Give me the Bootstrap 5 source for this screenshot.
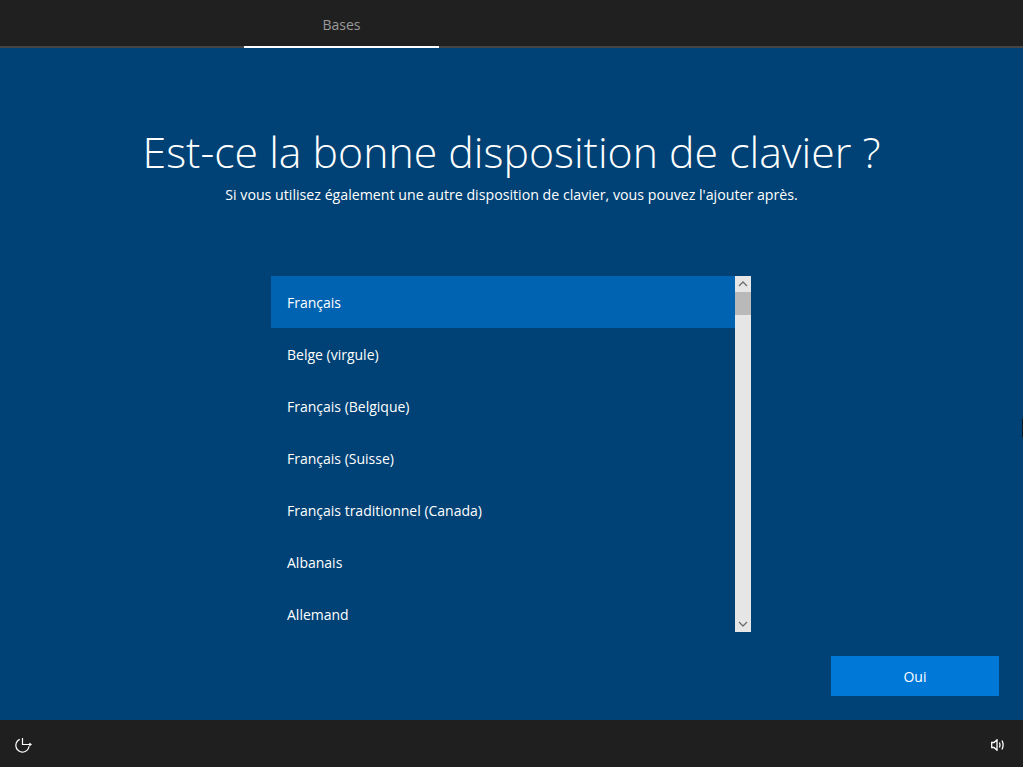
<!DOCTYPE html>
<html lang="fr">

<head>
    <meta charset="UTF-8">
    <meta name="viewport" content="width=device-width, initial-scale=1.0">
    <title>Disposition de clavier</title>
    <link rel="stylesheet" href="https://cdn.jsdelivr.net/npm/bootstrap@5.3.0/dist/css/bootstrap.min.css">
    <style>
        body {
            background-color: #004275;
            color: #fff;
            font-family: "Open Sans", "Noto Sans", sans-serif;
            height: 767px;
            overflow: hidden;
        }

        .oobe-top {
            height: 48px;
            background-color: #202020;
            border-bottom: 2px solid #454545;
        }

        .oobe-tab {
            margin-left: 244px;
            width: 195px;
            height: 48px;
            border-bottom: 2px solid #fff;
            color: #9a9a9a;
            font-size: 14px;
            padding-top: 14px;
            text-align: center;
        }

        .oobe-main {
            height: 672px;
        }

        .oobe-title {
            font-weight: 300;
            font-size: 42.8px;
            line-height: 60px;
            padding-top: 74px;
            margin: 0;
        }

        .oobe-sub {
            font-size: 14.2px;
            line-height: 20px;
            margin: 3px 0 0;
        }

        .oobe-listbox {
            width: 480px;
            height: 356px;
            margin: 71px 0 0 271px;
        }

        .oobe-rows {
            width: 464px;
            overflow: hidden;
            border-radius: 0;
        }

        .oobe-rows .list-group-item {
            background: transparent;
            color: #fff;
            border: 0;
            border-radius: 0;
            height: 52px;
            padding: 17px 16px 15px;
            font-size: 14px;
            line-height: 20px;
        }

        .oobe-rows .list-group-item.active {
            background-color: #0063b1;
        }

        .oobe-scroll {
            width: 16px;
            background-color: #e6e6e6;
        }

        .oobe-arrow {
            height: 16px;
        }

        .oobe-thumb {
            height: 23px;
            background-color: #b9b9b9;
        }

        .oobe-btn {
            width: 168px;
            height: 40px;
            margin: 24px 24px 0 0;
            background-color: #0078d7;
            color: #fff;
            border: 0;
            border-radius: 0;
            font-size: 14px;
            padding: 0;
        }

        .oobe-bottom {
            height: 47px;
            background-color: #1f1f1f;
            padding: 15px 18px 0 15px;
        }

        .oobe-speaker {
            margin-top: 4px;
        }

        .oobe-edge {
            position: absolute;
            right: 0;
            top: 419px;
            width: 1px;
            height: 18px;
            background-color: #101820;
        }
    </style>
</head>

<body>
    <div class="oobe-top">
        <div class="oobe-tab">Bases</div>
    </div>

    <div class="oobe-main">
        <div class="text-center">
            <h1 class="oobe-title">Est-ce la bonne disposition de clavier ?</h1>
            <p class="oobe-sub">Si vous utilisez également une autre disposition de clavier, vous pouvez l'ajouter après.</p>
        </div>

        <div class="oobe-listbox d-flex">
            <div class="oobe-rows list-group">
                <div class="list-group-item active">Français</div>
                <div class="list-group-item">Belge (virgule)</div>
                <div class="list-group-item">Français (Belgique)</div>
                <div class="list-group-item">Français (Suisse)</div>
                <div class="list-group-item">Français traditionnel (Canada)</div>
                <div class="list-group-item">Albanais</div>
                <div class="list-group-item">Allemand</div>
            </div>
            <div class="oobe-scroll d-flex flex-column">
                <div class="oobe-arrow d-flex align-items-center justify-content-center">
                    <svg width="10" height="6" viewBox="0 0 10 6"><path d="M1 5 L5 1 L9 5" fill="none" stroke="#6e6e6e" stroke-width="1.3"/></svg>
                </div>
                <div class="oobe-thumb"></div>
                <div class="flex-grow-1"></div>
                <div class="oobe-arrow d-flex align-items-center justify-content-center">
                    <svg width="10" height="6" viewBox="0 0 10 6"><path d="M1 1 L5 5 L9 1" fill="none" stroke="#6e6e6e" stroke-width="1.3"/></svg>
                </div>
            </div>
        </div>

        <div class="d-flex justify-content-end">
            <button type="button" class="btn oobe-btn">Oui</button>
        </div>
    </div>

    <div class="oobe-bottom d-flex align-items-start justify-content-between">
        <svg width="18" height="18" viewBox="0 0 18 18" fill="none" stroke="#fff" stroke-width="1.2">
            <path d="M4.8 4.4 A6.6 6.6 0 1 0 14 11.2"/>
            <path d="M7.5 3 V9.5 H15.5"/>
            <path d="M14.4 8.2 L16 9.5 L14.4 10.8"/>
        </svg>
        <svg class="oobe-speaker" width="14" height="12" viewBox="0 0 14 12" fill="none" stroke="#fff" stroke-width="1.3">
            <path d="M0.7 3.5 H3 L6 0.8 V11.2 L3 8.5 H0.7 Z"/>
            <path d="M8.5 3.5 Q9.6 6 8.5 8.5"/>
            <path d="M11 1.5 Q13.2 6 11 10.5"/>
        </svg>
    </div>

    <div class="oobe-edge"></div>

    <script src="https://cdn.jsdelivr.net/npm/bootstrap@5.3.0/dist/js/bootstrap.bundle.min.js"></script>
</body>

</html>
